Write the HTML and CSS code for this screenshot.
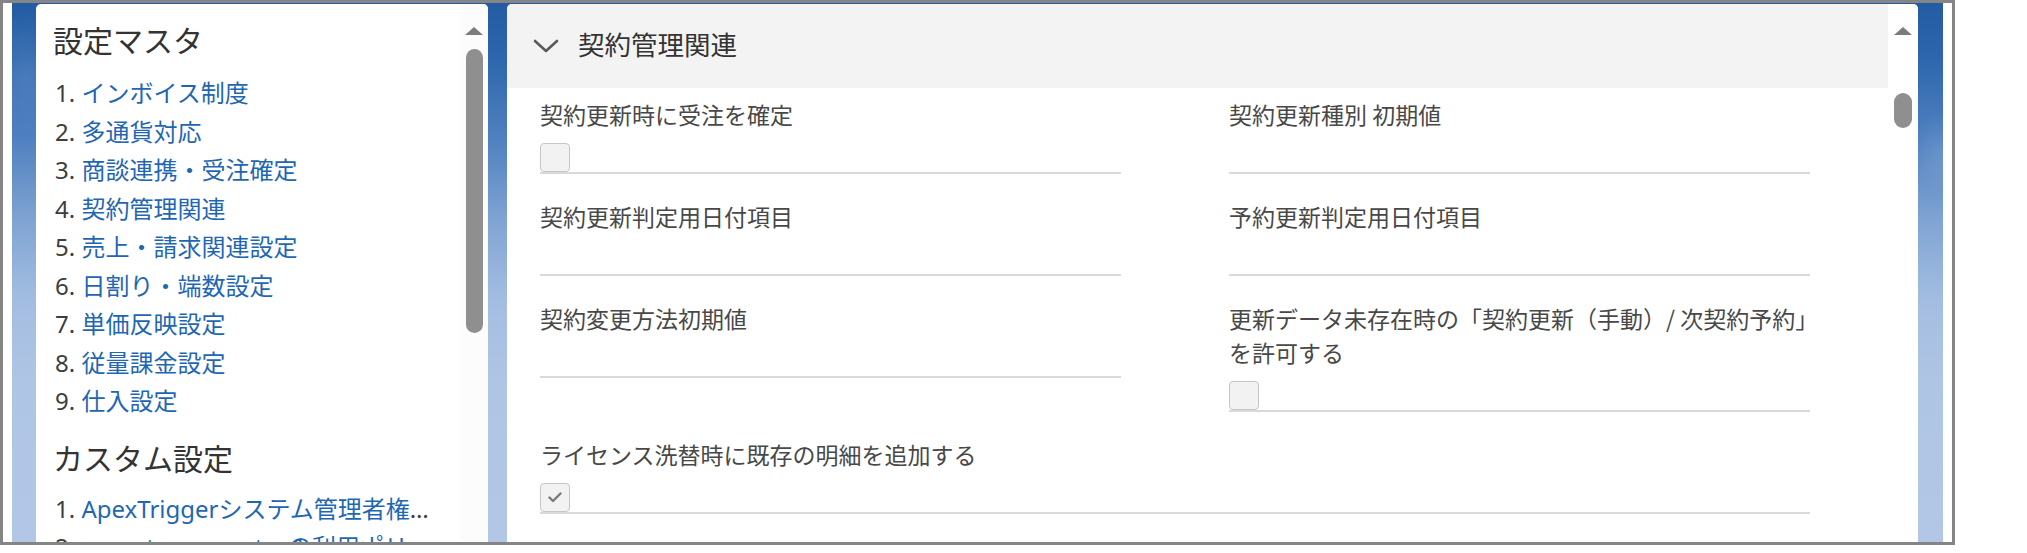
FILE: index.html
```html
<!DOCTYPE html>
<html lang="ja">
<head>
<meta charset="utf-8">
<title>設定マスタ</title>
<link rel="stylesheet" href="styles.css">
</head>
<body>
<div class="frame">
  <div class="stage">
    <aside class="panel nav">
      <div class="nav-body">
        <h2 class="nav-title">設定マスタ</h2>
        <ol class="nav-list">
          <li><span class="num">1.</span> <a class="link">インボイス制度</a></li>
          <li><span class="num">2.</span> <a class="link">多通貨対応</a></li>
          <li><span class="num">3.</span> <a class="link">商談連携・受注確定</a></li>
          <li><span class="num">4.</span> <a class="link">契約管理関連</a></li>
          <li><span class="num">5.</span> <a class="link">売上・請求関連設定</a></li>
          <li><span class="num">6.</span> <a class="link">日割り・端数設定</a></li>
          <li><span class="num">7.</span> <a class="link">単価反映設定</a></li>
          <li><span class="num">8.</span> <a class="link">従量課金設定</a></li>
          <li><span class="num">9.</span> <a class="link">仕入設定</a></li>
        </ol>
        <h2 class="nav-title nav-title-sub">カスタム設定</h2>
        <ol class="nav-list nav-list-sub">
          <li><span class="num">1.</span> <a class="link">ApexTriggerシステム管理者権限設定</a></li>
          <li><span class="num">2.</span> <a class="link">aspects-connectorの利用ポリシー設定</a></li>
        </ol>
      </div>
      <div class="scroll scroll-nav">
        <span class="scroll-arrow"></span>
        <span class="scroll-thumb"></span>
      </div>
    </aside>

    <section class="panel main">
      <div class="main-body">
        <header class="sec-head">
          <svg class="chevron" width="26" height="14" viewBox="0 0 26 14" aria-hidden="true">
            <polyline points="2,2 13,12 24,2" fill="none" stroke="#5a5a5a" stroke-width="2.6" stroke-linecap="round" stroke-linejoin="round"/>
          </svg>
          <h3 class="sec-title">契約管理関連</h3>
        </header>
        <div class="form">
          <div class="field">
            <div class="label">契約更新時に受注を確定</div>
            <div class="value"><span class="checkbox"></span></div>
          </div>
          <div class="field">
            <div class="label">契約更新種別 初期値</div>
            <div class="value"></div>
          </div>
          <div class="field">
            <div class="label">契約更新判定用日付項目</div>
            <div class="value"></div>
          </div>
          <div class="field">
            <div class="label">予約更新判定用日付項目</div>
            <div class="value"></div>
          </div>
          <div class="field">
            <div class="label">契約変更方法初期値</div>
            <div class="value"></div>
          </div>
          <div class="field">
            <div class="label"><span class="nowrap">更新データ未存在時の「契約更新（手動）/ 次契約予約」</span><br>を許可する</div>
            <div class="value"><span class="checkbox"></span></div>
          </div>
          <div class="field field-wide">
            <div class="label">ライセンス洗替時に既存の明細を追加する</div>
            <div class="value">
              <span class="checkbox checked">
                <svg width="14" height="11" viewBox="0 0 14 11" aria-hidden="true">
                  <polyline points="1.5,5.5 5,9 12.5,1.5" fill="none" stroke="#7a7a7a" stroke-width="2.4" stroke-linecap="round" stroke-linejoin="round"/>
                </svg>
              </span>
            </div>
          </div>
        </div>
      </div>
      <div class="scroll scroll-main">
        <span class="scroll-arrow"></span>
        <span class="scroll-thumb"></span>
      </div>
    </section>
  </div>
</div>
</body>
</html>
```

FILE: styles.css
```css
* { box-sizing: border-box; }

html, body {
  margin: 0;
  padding: 0;
  background: #ffffff;
}

body {
  font-family: "Noto Sans", "Noto Sans CJK JP", sans-serif;
  color: #3e3e3c;
}

.frame {
  width: 1955px;
  height: 545px;
  border: 3px solid #858585;
  background: #ffffff;
  padding: 0 9px;
  overflow: hidden;
}

.stage {
  height: 100%;
  display: flex;
  align-items: stretch;
  gap: 19px;
  padding: 1px 25px 0 24px;
  overflow: hidden;
  background:
    radial-gradient(ellipse 60px 90px at 14px 70px, rgba(255,255,255,0.10), rgba(255,255,255,0) 70%),
    radial-gradient(ellipse 40px 60px at 1930px 150px, rgba(255,255,255,0.10), rgba(255,255,255,0) 70%),
    linear-gradient(180deg, #235ca3 0%, #2d66ad 10%, #4f80bf 25%, #7fa3d3 40%, #a3bde1 55%, #afc5e4 70%, #b2c7e5 100%);
}

.panel {
  background: #ffffff;
  border-radius: 5px 5px 0 0;
  display: flex;
  overflow: hidden;
}

/* ---------- left navigation ---------- */
.nav {
  width: 452px;
  flex: none;
}

.nav-body {
  flex: 1;
  min-width: 0;
  padding: 15px 24px 0 17px;
}

.nav-title {
  margin: 0;
  font-family: "Noto Sans CJK JP", sans-serif;
  font-weight: 400;
  font-size: 30px;
  line-height: 40px;
  color: #333333;
}

.nav-title-sub {
  margin-top: 16px;
}

.nav-list {
  list-style: none;
  margin: 15px 0 0 0;
  padding: 0 0 0 2px;
}

.nav-list-sub {
  margin-top: 13px;
}

.nav-list li {
  font-size: 24px;
  line-height: 38.5px;
  white-space: nowrap;
}

.nav-list-sub li {
  overflow: hidden;
  text-overflow: ellipsis;
}

.num {
  color: #3e3e3c;
}

.link {
  color: #1f67b3;
  text-decoration: none;
}

/* ---------- scrollbars ---------- */
.scroll {
  flex: none;
  display: flex;
  flex-direction: column;
  align-items: center;
  background: #fcfcfc;
}

.scroll-nav { width: 28px; }
.scroll-main { width: 30px; background: #ffffff; }

.scroll-arrow {
  margin-top: 23px;
  width: 0;
  height: 0;
  border-left: 9px solid transparent;
  border-right: 9px solid transparent;
  border-bottom: 8px solid #7c7c7c;
}

.scroll-thumb {
  background: #8f8f8f;
  border-radius: 9px;
}

.scroll-nav .scroll-thumb {
  margin-top: 14px;
  width: 17px;
  height: 284px;
}

.scroll-main .scroll-thumb {
  margin-top: 58px;
  width: 18px;
  height: 35px;
}

/* ---------- main section ---------- */
.main {
  flex: 1;
  min-width: 0;
}

.main-body {
  flex: 1;
  min-width: 0;
  display: flex;
  flex-direction: column;
}

.sec-head {
  height: 84px;
  flex: none;
  background: #f3f3f3;
  display: flex;
  align-items: center;
  gap: 19px;
  padding: 0 0 4px 26px;
}

.chevron {
  flex: none;
  margin-top: 4px;
}

.sec-title {
  margin: 0;
  font-family: "Noto Sans CJK JP", sans-serif;
  font-weight: 400;
  font-size: 26.5px;
  line-height: 1;
  color: #333333;
}

.form {
  display: grid;
  grid-template-columns: minmax(0, 1fr) minmax(0, 1fr);
  column-gap: 108px;
  row-gap: 25px;
  align-items: start;
  padding: 9px 78px 0 33px;
}

.field {
  min-width: 0;
  border-bottom: 2px solid #d9d9d9;
}

.field-wide {
  grid-column: 1 / -1;
}

.label {
  font-family: "Noto Sans CJK JP", sans-serif;
  font-size: 23px;
  line-height: 34px;
  color: #484848;
}

.nowrap {
  white-space: nowrap;
}

.value {
  height: 41px;
  display: flex;
  align-items: flex-end;
}

.checkbox {
  width: 30px;
  height: 29px;
  border: 1px solid #c6c6c6;
  border-radius: 4px;
  background: #f2f2f2;
  display: flex;
  align-items: center;
  justify-content: center;
}
```
